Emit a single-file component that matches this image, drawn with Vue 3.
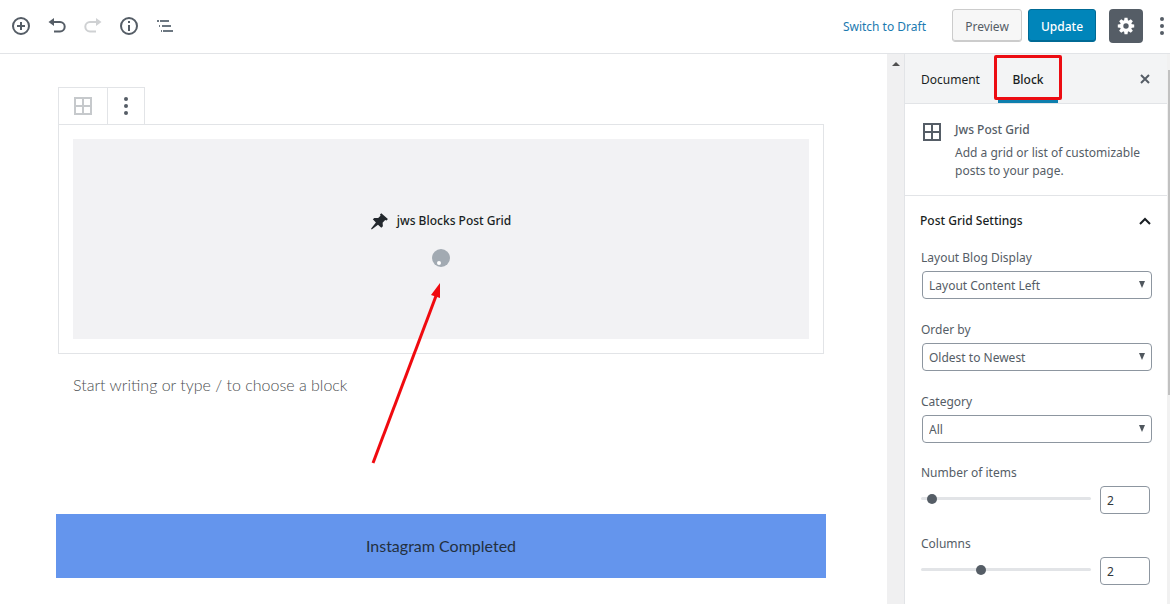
<script setup>
import { ref } from 'vue'

const selects = ref([
  { id: 'layout', label: 'Layout Blog Display', value: 'Layout Content Left', options: ['Layout Content Left'] },
  { id: 'order', label: 'Order by', value: 'Oldest to Newest', options: ['Oldest to Newest'] },
  { id: 'category', label: 'Category', value: 'All', options: ['All'] }
])

const ranges = ref([
  { id: 'items', label: 'Number of items', value: 2, min: 1, max: 100 },
  { id: 'columns', label: 'Columns', value: 2, min: 1, max: 4 }
])
</script>

<template>
  <div class="editor">
    <header class="topbar">
      <div class="tools">
        <button class="icon-btn" aria-label="Add block">
          <svg width="20" height="20" viewBox="0 0 20 20" fill="none" stroke="#555d66" stroke-width="2">
            <circle cx="10" cy="10" r="8" />
            <path d="M10 6v8M6 10h8" />
          </svg>
        </button>
        <button class="icon-btn" aria-label="Undo">
          <svg width="20" height="20" viewBox="0 0 20 20">
            <path d="M6 6h7a4.700 4.700 0 0 1 0 9.400H7" fill="none" stroke="#555d66" stroke-width="2" />
            <path d="M7 2v8L1.500 6z" fill="#555d66" />
          </svg>
        </button>
        <button class="icon-btn" aria-label="Redo" disabled>
          <svg width="20" height="20" viewBox="0 0 20 20">
            <path d="M14 6H7a4.700 4.700 0 0 0 0 9.400h6" fill="none" stroke="#cfd1d3" stroke-width="2" />
            <path d="M13 2v8l5.500-4z" fill="#cfd1d3" />
          </svg>
        </button>
        <button class="icon-btn" aria-label="Content structure">
          <svg width="20" height="20" viewBox="0 0 20 20">
            <circle cx="10" cy="10" r="8" fill="none" stroke="#555d66" stroke-width="2" />
            <path d="M9 9h2v6H9zM9 5h2v2H9z" fill="#555d66" />
          </svg>
        </button>
        <button class="icon-btn" aria-label="Block navigation">
          <svg width="20" height="20" viewBox="0 0 20 20" fill="#6c7781">
            <path d="M2 4h2v2H2zM5 4h9v2H5zM4 9h1v2H4zM7 9h9v2H7zM6 14h1v2H6zM8 14h10v2H8z" />
          </svg>
        </button>
      </div>
      <div class="actions">
        <a class="draft" href="#">Switch to Draft</a>
        <button class="btn preview">Preview</button>
        <button class="btn update">Update</button>
        <button class="gear" aria-label="Settings">
          <svg width="20" height="20" viewBox="0 0 20 20">
            <g fill="#fff">
              <circle cx="10" cy="10" r="6" />
              <path d="M8.500 1.800h3l.6 4H7.900zM8.500 18.200h3l.6-4H7.900zM1.800 8.500v3l4 .6V7.900zM18.200 8.500v3l-4 .6V7.900z" />
              <path transform="rotate(45 10 10)" d="M8.500 1.800h3l.6 4H7.900zM8.500 18.200h3l.6-4H7.900zM1.800 8.500v3l4 .6V7.900zM18.200 8.500v3l-4 .6V7.900z" />
            </g>
            <circle cx="10" cy="10" r="2.700" fill="#555d66" />
          </svg>
        </button>
        <button class="more" aria-label="More options">
          <svg width="6" height="20" viewBox="0 0 6 20" fill="#555d66">
            <circle cx="3" cy="3" r="2" /><circle cx="3" cy="10" r="2" /><circle cx="3" cy="17" r="2" />
          </svg>
        </button>
      </div>
    </header>

    <div class="body">
      <main class="canvas">
        <div class="block-tools">
          <button class="tool type" aria-label="Change block type">
            <svg width="18" height="18" viewBox="0 0 18 18" fill="none" stroke="#c6c9cc" stroke-width="2">
              <path d="M1 1h16v16H1zM9 1v16M1 9h16" />
            </svg>
          </button>
          <button class="tool dots" aria-label="Block options">
            <svg width="6" height="20" viewBox="0 0 6 20" fill="#555d66">
              <circle cx="3" cy="3" r="2" /><circle cx="3" cy="10" r="2" /><circle cx="3" cy="17" r="2" />
            </svg>
          </button>
        </div>
        <section class="block">
          <div class="placeholder">
            <div class="placeholder-title">
              <svg width="18" height="18" viewBox="0 0 18 18" fill="#23282d">
                <path d="M10.300 1.200l6.600 5.900-1.300 1.400-1.400-.5-2.600 2.700.3 3.600-1.600 1.500-3.300-3.100L1 17.300l-.9-.1.100-.8 4.700-5.900-3.100-3.200 1.500-1.400 3.900.2L9.500 3.700 9 2.500z" />
              </svg>
              <span>jws Blocks Post Grid</span>
            </div>
            <svg class="spinner" width="18" height="18" viewBox="0 0 18 18">
              <circle cx="9" cy="9" r="9" fill="#a2aab2" />
              <circle cx="7" cy="14" r="2" fill="#fff" />
            </svg>
          </div>
        </section>
        <p class="prompt">Start writing or type / to choose a block</p>
        <div class="banner">Instagram Completed</div>
        <svg class="arrow" width="72" height="184" viewBox="0 0 72 184">
          <path d="M2 179L65 12" stroke="#f00a0f" stroke-width="3" />
          <path d="M69 -1v15l-9-3z" fill="#f00a0f" />
        </svg>
      </main>
      <div class="gutter" aria-hidden="true">
        <svg width="8" height="4" viewBox="0 0 8 4"><path d="M4 0l4 4H0z" fill="#505050" /></svg>
      </div>

      <aside class="sidebar">
        <nav class="tabs">
          <button class="tab">Document</button>
          <button class="tab active">Block<span class="highlight"></span></button>
          <button class="close" aria-label="Close settings">
            <svg width="10" height="10" viewBox="0 0 10 10" stroke="#555d66" stroke-width="2">
              <path d="M1 1l8 8M9 1l-8 8" />
            </svg>
          </button>
        </nav>
        <section class="card">
          <svg width="18" height="18" viewBox="0 0 18 18" fill="none" stroke="#555d66" stroke-width="2">
            <path d="M1 1h16v16H1zM9 1v16M1 9h16" />
          </svg>
          <div>
            <h2>Jws Post Grid</h2>
            <p>Add a grid or list of customizable posts to your page.</p>
          </div>
        </section>
        <section class="panel">
          <button class="panel-title">
            Post Grid Settings
            <svg width="12" height="8" viewBox="0 0 12 8" fill="none" stroke="#191e23" stroke-width="2">
              <path d="M1 7l5-5 5 5" />
            </svg>
          </button>
          <div class="selects">
            <div v-for="s in selects" :key="s.id">
              <label :for="s.id">{{ s.label }}</label>
              <div class="select-wrap">
                <select :id="s.id" v-model="s.value">
                  <option v-for="o in s.options" :key="o">{{ o }}</option>
                </select>
                <svg width="6" height="8" viewBox="0 0 6 8"><path d="M0 0h6L3 7z" fill="#50575e" /></svg>
              </div>
            </div>
          </div>
          <div class="ranges">
            <div v-for="r in ranges" :key="r.id">
              <label :for="r.id">{{ r.label }}</label>
              <div class="range-row">
                <input :id="r.id" v-model="r.value" type="range" :min="r.min" :max="r.max">
                <input v-model="r.value" class="number" type="text" inputmode="numeric" :aria-label="r.label">
              </div>
            </div>
          </div>
        </section>
        <div class="track" aria-hidden="true"><div class="thumb"></div></div>
      </aside>
    </div>
  </div>
</template>

<style>
body {
  margin: 0;
}
</style>

<style scoped>
* {
  box-sizing: border-box;
}
.editor {
  height: 100vh;
  display: flex;
  flex-direction: column;
  overflow: hidden;
  background: #fff;
  color: #555d66;
  font: 12px/18px "Noto Sans", "Open Sans", sans-serif;
}
button,
select,
input {
  margin: 0;
  padding: 0;
  border: 0;
  background: none;
  color: inherit;
  font: inherit;
}
svg {
  display: block;
  flex: none;
}
h2,
p {
  margin: 0;
}
.topbar {
  flex: none;
  height: 54px;
  display: flex;
  align-items: center;
  justify-content: space-between;
  padding: 0 5px 2px 11px;
  border-bottom: 1px solid #e2e4e7;
}
.tools {
  display: flex;
  gap: 16px;
}
.actions {
  display: flex;
  align-items: center;
}
.draft {
  margin-right: 26px;
  padding-top: 2px;
  color: #1b7ab0;
  text-decoration: none;
}
.btn {
  height: 33px;
  padding-top: 2px;
  border: 1px solid #ccc;
  border-radius: 3px;
}
.preview {
  width: 70px;
  margin-right: 6px;
  background: #f7f7f7;
  box-shadow: inset 0 -1px 0 #ccc;
}
.update {
  width: 68px;
  margin-right: 13px;
  border-color: #006a95;
  background: #0085ba;
  box-shadow: inset 0 -1px 0 #006a95;
  color: #fff;
  font-weight: 500;
}
.gear {
  width: 34px;
  height: 34px;
  display: grid;
  place-items: center;
  margin-right: 16px;
  border-radius: 4px;
  background: #555d66;
}
.body {
  flex: 1;
  min-height: 0;
  display: flex;
}
.canvas {
  position: relative;
  flex: 1;
  min-width: 0;
  padding: 33px 61px 0 56px;
}
.block-tools {
  display: flex;
  width: max-content;
  height: 37px;
  margin-left: 2px;
  border: 1px solid #e2e4e7;
  border-bottom: 0;
}
.tool {
  display: grid;
  place-items: center;
}
.type {
  width: 49px;
  border-right: 1px solid #e2e4e7;
}
.dots {
  width: 36px;
}
.block {
  margin: 0 2px;
  padding: 14px;
  border: 1px solid #e2e4e7;
}
.placeholder {
  height: 200px;
  display: flex;
  flex-direction: column;
  align-items: center;
  justify-content: center;
  gap: 19px;
  background: #f2f2f4;
  color: #191e23;
  font-weight: 500;
}
.placeholder-title {
  display: flex;
  align-items: center;
  gap: 8px;
}
.prompt {
  margin: 19px 17px 0;
  color: #4c4f52;
  font: 300 16px/24px Lato, sans-serif;
}
.banner {
  margin-top: 117px;
  padding: 20px;
  background: #6495ed;
  color: #23303f;
  font: 16px/24px Lato, sans-serif;
  text-align: center;
}
.arrow {
  position: absolute;
  top: 230px;
  left: 371px;
  overflow: visible;
}
.gutter {
  flex: none;
  width: 17px;
  padding-top: 8px;
  background: #f0f0f1;
}
.gutter svg {
  margin: 0 auto;
}
.sidebar {
  position: relative;
  flex: none;
  width: 266px;
  padding-right: 3px;
  border-left: 1px solid #e2e4e7;
}
.tabs {
  height: 50px;
  display: flex;
  align-items: center;
  background: #f3f4f5;
  border-bottom: 1px solid #e2e4e7;
  color: #191e23;
}
.tab {
  position: relative;
  width: 93px;
  height: 49px;
  padding: 2px 0 0 16px;
  text-align: left;
}
.tab.active {
  width: 60px;
  padding: 5px 0 0;
  border-bottom: 3px solid #0e7fae;
  font-weight: 500;
  text-align: center;
}
.highlight {
  position: absolute;
  inset: 1px -4px 0;
  border: 3px solid #ec0c12;
  border-radius: 2px;
}
.close {
  margin: 0 17px 0 auto;
}
.card {
  display: flex;
  align-items: flex-start;
  gap: 14px;
  padding: 17px 16px 15px 18px;
  border-bottom: 1px solid #e2e4e7;
}
.card svg {
  margin-top: 2px;
}
.card h2 {
  margin-bottom: 5px;
  font-size: 12px;
  font-weight: 500;
}
.panel {
  padding: 0 15px;
}
.panel-title {
  width: 100%;
  height: 50px;
  display: flex;
  align-items: center;
  justify-content: space-between;
  padding-right: 1px;
  color: #191e23;
  font-weight: 500;
}
label {
  display: block;
  width: max-content;
  margin: 0 0 4px 1px;
}
.selects {
  display: grid;
  gap: 22px;
  padding-top: 3px;
}
.select-wrap {
  position: relative;
  margin: 0 0 0 2px;
}
select {
  display: block;
  width: 100%;
  height: 28px;
  padding: 2px 20px 0 6px;
  border: 1px solid #8d96a0;
  border-radius: 4px;
  appearance: none;
  background: #fff;
}
.select-wrap svg {
  position: absolute;
  top: 10px;
  right: 7px;
  pointer-events: none;
}
.ranges {
  display: grid;
  gap: 21px;
  padding-top: 21px;
}
.range-row {
  display: flex;
  align-items: flex-start;
  gap: 9px;
  margin: 0 2px 0 1px;
}
input[type="range"] {
  flex: 1;
  min-width: 0;
  height: 24px;
  appearance: none;
}
input[type="range"]::-webkit-slider-runnable-track {
  height: 3px;
  border-radius: 2px;
  background: #e2e4e7;
}
input[type="range"]::-webkit-slider-thumb {
  width: 18px;
  height: 18px;
  margin-top: -7px;
  border: 4px solid transparent;
  border-radius: 50%;
  appearance: none;
  background: #555d66;
  background-clip: padding-box;
}
.number {
  width: 50px;
  height: 28px;
  padding: 0 6px;
  border: 1px solid #8d96a0;
  border-radius: 4px;
  color: #32373c;
}
.track {
  position: absolute;
  top: 0;
  right: 0;
  bottom: 0;
  width: 3px;
  background: #f1f1f1;
}
.thumb {
  height: 59%;
  margin: 16px 0 0 1px;
  background: #c1c1c1;
}
</style>
